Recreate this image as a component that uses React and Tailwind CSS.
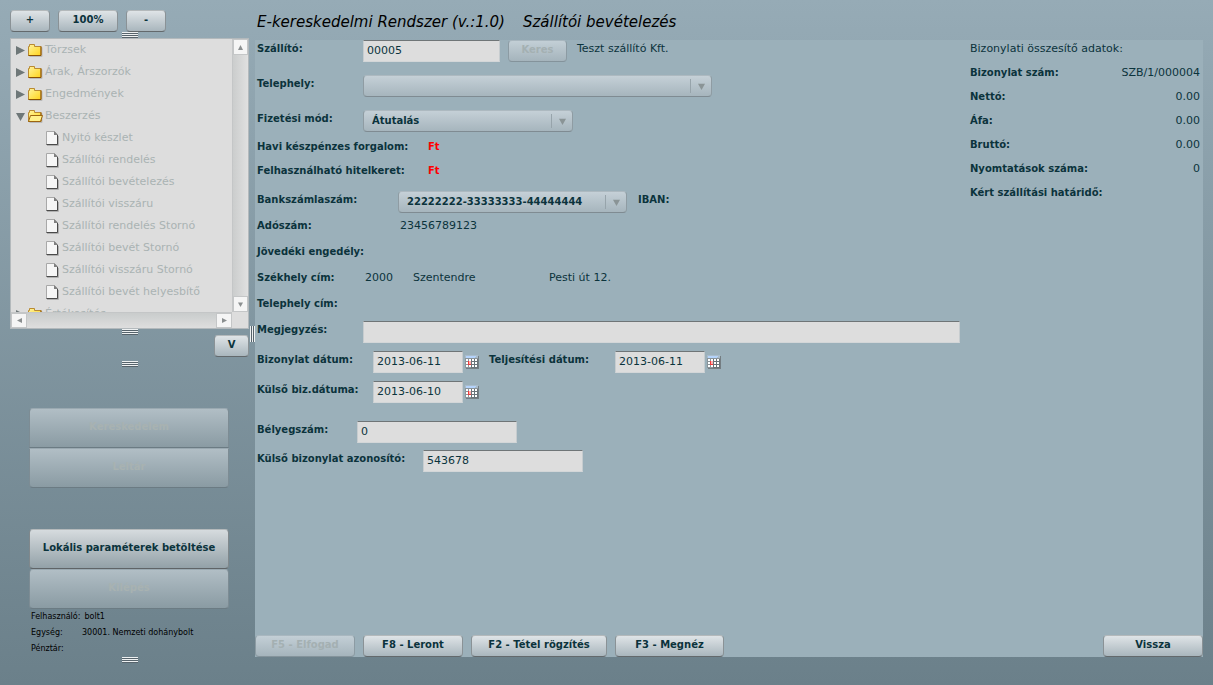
import React from 'react';

const BTN =
  'shrink-0 rounded-[4px] border pb-[2px] text-[10px] font-bold leading-none flex items-center justify-center';
const BTN_ON =
  'border-t-[#b4b9bb] border-x-[#8a9296] border-b-[#63696c] bg-linear-to-b from-[#dfe4e7] to-[#a9b6bd] text-[#0b333c]';
const BTN_OFF =
  'border-t-[#a9b7bf] border-x-[#8c9ba3] border-b-[#84939b] bg-linear-to-b from-[#c3cfd6] to-[#a5b4bc] text-[#a4b0b2]';
const BIG_ON =
  'border-t-[#b4b9bb] border-x-[#80888c] border-b-[#5f6467] bg-linear-to-b from-[#d6dbde] to-[#93a1a8] text-[#0b333c]';
const BIG_OFF =
  'border-t-[#9aa9b1] border-x-[#7d8c94] border-b-[#6b7b83] bg-linear-to-b from-[#b1bec5] to-[#8a9ba3] text-[#a8b2b1]';

function Button({ className = '', disabled = false, big = false, children }) {
  const skin = big ? (disabled ? BIG_OFF : BIG_ON) : disabled ? BTN_OFF : BTN_ON;
  return (
    <button type="button" disabled={disabled} className={`${BTN} ${skin} ${big ? 'h-10' : 'h-[22px]'} ${className}`}>
      {children}
    </button>
  );
}

function Grip({ className = '' }) {
  return (
    <svg width="16" height="6" viewBox="0 0 16 6" shapeRendering="crispEdges" className={`shrink-0 ${className}`} aria-hidden="true">
      <path d="M0 0h16v1H0zM0 2h16v1H0zM0 4h16v1H0z" fill="#eef1f2" />
      <path d="M0 1h16v1H0zM0 3h16v1H0zM0 5h16v1H0z" fill="#56636b" />
    </svg>
  );
}

function Folder({ open }) {
  return (
    <svg width="15" height="13" viewBox="0 0 15 13" className="shrink-0" aria-hidden="true">
      <defs>
        <linearGradient id="fold" x1="0" y1="0" x2="1" y2="1">
          <stop offset="0" stopColor="#fff3a0" />
          <stop offset="0.5" stopColor="#ffe45a" />
          <stop offset="1" stopColor="#ffd21c" />
        </linearGradient>
      </defs>
      <path d="M1.5 12.5h12.5v-9" fill="none" stroke="#b9b9b9" />
      <path d="M.5 11.5v-9h1v-2h5v2h6.500v9z" fill="url(#fold)" stroke="#b98a33" />
      <path d="M.5 11.500H13v-9" fill="none" stroke="#8c5200" />
      {open && <path d="M.5 11.5L2.500 5.500h12L12.500 11.500z" fill="#fff08a" stroke="#9c6410" />}
    </svg>
  );
}

function Page() {
  return (
    <svg width="13" height="15" viewBox="0 0 13 15" className="shrink-0" aria-hidden="true">
      <path d="M1 14.5h11.500V5" fill="none" stroke="#b0b0b0" />
      <path d="M.5 13.5V.5h8l3 3v10z" fill="#f6f6f6" stroke="#a8a8a8" />
      <path d="M.5 13.5h11V4" fill="none" stroke="#4a4a4a" />
      <path d="M8 0v4h4z" fill="#808080" />
    </svg>
  );
}

function Triangle({ dir, className = 'text-[#6e7778]', size = 9 }) {
  const d = {
    right: 'M0 0L9 4.5L0 9z',
    left: 'M9 0L0 4.5L9 9z',
    down: 'M0 1H9L4.500 9z',
    up: 'M0 9H9L4.500 0z',
  }[dir];
  return (
    <svg width={size} height={size} viewBox="0 0 9 9" className={`shrink-0 ${className}`} aria-hidden="true">
      <path d={d} fill="currentColor" />
    </svg>
  );
}

function Calendar() {
  return (
    <svg width="14" height="14" viewBox="0 0 14 14" shapeRendering="crispEdges" aria-hidden="true">
      <path d="M1 1h13v13H1z" fill="#747d82" />
      <path d="M0 0h13v13H0z" fill="#8b9499" />
      <path d="M6 4h7v9H6z" fill="#6a7378" />
      <path d="M0 0h13v3H0z" fill="#a9bccb" />
      <path d="M1 1h11l-3 2H1z" fill="#b4d3fb" />
      <path
        d="M1 4h2v2H1zM4 4h2v2H4zM7 4h2v2H7zM10 4h2v2h-2zM1 7h2v2H1zM7 7h2v2H7zM10 7h2v2h-2zM1 10h2v2H1zM4 10h2v2H4zM7 10h2v2H7zM10 10h2v2h-2z"
        fill="#fff"
      />
      <path d="M4 6h2v3H4z" fill="#ffb0b0" />
      <path d="M3 9h3v1H3zM3 6h1v3H3z" fill="#f03a3a" />
    </svg>
  );
}

function Label({ className = '', htmlFor, children }) {
  const cls = `shrink-0 text-[10px] font-bold leading-[18px] whitespace-nowrap ${className}`;
  return htmlFor ? (
    <label htmlFor={htmlFor} className={cls}>
      {children}
    </label>
  ) : (
    <span className={cls}>{children}</span>
  );
}

function Input({ className = '', ...props }) {
  return (
    <input
      type="text"
      className={`h-[22px] rounded-none border border-t-[#6f7577] border-x-[#c6cccf] border-b-[#d3d6d8] bg-[#dddddd] px-[3px] pb-[2px] text-[11px] text-[#0b333c] outline-none ${className}`}
      {...props}
    />
  );
}

function Select({ id, className = '', value }) {
  return (
    <div className={`relative shrink-0 ${className}`}>
      <select
        id={id}
        defaultValue={value}
        className="h-[22px] w-full appearance-none rounded-[4px] border border-t-[#adb9c0] border-x-[#8f9ca3] border-b-[#7f8b92] bg-linear-to-b from-[#c5d0d7] to-[#a6b5bd] pl-2 pr-6 text-[10px] font-bold leading-[18px] text-[#0b333c] outline-none"
      >
        <option value={value}>{value}</option>
      </select>
      <span className="pointer-events-none absolute inset-y-1 right-0 flex w-[22px] items-center justify-center border-l border-[#97a4ab]">
        <Triangle dir="down" size={7} className="text-[#8a9496]" />
      </span>
    </div>
  );
}

function DateField({ id, value }) {
  return (
    <div className="flex shrink-0 gap-[2px]">
      <Input id={id} defaultValue={value} className="w-[90px]" />
      <button type="button" aria-label="Naptár" className="flex h-[22px] items-center">
        <Calendar />
      </button>
    </div>
  );
}

const FOLDERS = ['Törzsek', 'Árak, Árszorzók', 'Engedmények'];
const PAGES = [
  'Nyitó készlet',
  'Szállítói rendelés',
  'Szállítói bevételezés',
  'Szállítói visszáru',
  'Szállítói rendelés Stornó',
  'Szállítói bevét Stornó',
  'Szállítói visszáru Stornó',
  'Szállítói bevét helyesbítő',
];

function FolderRow({ label, open = false }) {
  return (
    <li>
      <button type="button" className="flex h-[22px] w-full items-center pl-[5px]">
        <Triangle dir={open ? 'down' : 'right'} />
        <span className="ml-[3px] mr-[2px] flex">
          <Folder open={open} />
        </span>
        {label}
      </button>
    </li>
  );
}

const SCROLL_BTN = 'flex shrink-0 items-center justify-center border border-[#c4c6c7] bg-[#f5f5f5]';

function Tree() {
  return (
    <div className="flex h-[291px] shrink-0 flex-col border border-[#b3b9bc] bg-[#dddddd] text-[#aab3b3]">
      <div className="flex min-h-0 flex-1">
        <ul className="min-w-0 flex-1 overflow-hidden whitespace-nowrap">
          {FOLDERS.map((f) => (
            <FolderRow key={f} label={f} />
          ))}
          <FolderRow label="Beszerzés" open />
          {PAGES.map((p) => (
            <li key={p}>
              <button type="button" className="flex h-[22px] w-full items-center gap-[3px] pl-[35px]">
                <Page />
                {p}
              </button>
            </li>
          ))}
          <FolderRow label="Értékesítés" />
        </ul>
        <div className="flex w-4 shrink-0 flex-col justify-between border-l border-[#c4c6c7] bg-linear-to-r from-[#cbcdcd] to-[#e0e0e0]">
          <button type="button" aria-label="Fel" className={`${SCROLL_BTN} h-4`}>
            <Triangle dir="up" size={5} className="text-[#8b8f90]" />
          </button>
          <button type="button" aria-label="Le" className={`${SCROLL_BTN} h-4`}>
            <Triangle dir="down" size={5} className="text-[#8b8f90]" />
          </button>
        </div>
      </div>
      <div className="flex h-4 shrink-0 pr-4">
        <div className="flex flex-1 justify-between border-t border-[#c4c6c7] bg-linear-to-b from-[#c9cccc] to-[#dedede]">
          <button type="button" aria-label="Balra" className={`${SCROLL_BTN} w-4`}>
            <Triangle dir="left" size={5} className="text-[#8b8f90]" />
          </button>
          <button type="button" aria-label="Jobbra" className={`${SCROLL_BTN} w-4`}>
            <Triangle dir="right" size={5} className="text-[#8b8f90]" />
          </button>
        </div>
      </div>
    </div>
  );
}

const SUMMARY = [
  ['Bizonylat szám:', 'SZB/1/000004'],
  ['Nettó:', '0.00'],
  ['Áfa:', '0.00'],
  ['Bruttó:', '0.00'],
  ['Nyomtatások száma:', '0'],
  ['Kért szállítási határidő:', ''],
];

export default function App() {
  return (
    <div className="flex min-h-screen bg-linear-to-b from-[#96abb6] to-[#6b808a] pr-[10px] pl-[10px] font-['DejaVu_Sans',sans-serif] text-[11px] text-[#0b333c]">
      <aside className="flex w-[239px] shrink-0 flex-col pt-[10px]">
        <div className="flex gap-2">
          <Button className="w-10">+</Button>
          <Button className="w-[60px]">100%</Button>
          <Button className="w-10">-</Button>
        </div>
        <Grip className="self-center" />
        <Tree />
        <Grip className="self-center" />
        <Button className="w-[35px] self-end">V</Button>
        <Grip className="mt-1 self-center" />
        <div className="mt-[41px] flex flex-col pr-5 pl-[19px]">
          <Button big disabled className="rounded-b-none">
            Kereskedelem
          </Button>
          <Button big disabled className="rounded-t-none">
            Leltár
          </Button>
          <Button big className="mt-[41px]">
            Lokális paraméterek betöltése
          </Button>
          <Button big disabled>
            Kilépés
          </Button>
        </div>
        <dl className="flex flex-col pl-[21px] text-[8px] leading-4 text-black">
          <div className="flex gap-1">
            <dt>Felhasználó:</dt>
            <dd>bolt1</dd>
          </div>
          <div className="flex">
            <dt className="w-[51px]">Egység:</dt>
            <dd>30001. Nemzeti dohánybolt</dd>
          </div>
          <div className="flex">
            <dt>Pénztár:</dt>
          </div>
        </dl>
        <Grip className="self-center" />
      </aside>

      <div className="flex w-[6px] shrink-0 items-start pt-[326px] pl-px">
        <svg width="5" height="16" viewBox="0 0 5 16" shapeRendering="crispEdges" aria-hidden="true">
          <path d="M0 0h1v16H0zM2 0h1v16H2zM4 0h1v16H4z" fill="#eef1f2" />
          <path d="M1 0h1v16H1zM3 0h1v16H3z" fill="#56636b" />
        </svg>
      </div>

      <main className="flex min-w-0 flex-1 flex-col pb-7">
        <h1 className="flex h-10 items-center gap-[18px] pt-1 pl-[2px] text-[15px] text-black italic">
          <span>E-kereskedelmi Rendszer (v.:1.0)</span>
          <span>Szállítói bevételezés</span>
        </h1>

        <section className="flex flex-1 flex-col justify-between bg-[#9bb0ba]">
          <div className="flex gap-[10px] pr-[3px] pl-[2px]">
            <form className="min-w-0 flex-1">
              <div className="flex h-[35px] items-start">
                <Label htmlFor="szallito" className="w-[106px]">Szállító:</Label>
                <Input id="szallito" defaultValue="00005" className="w-[137px]" />
                <Button disabled className="ml-2 w-[59px]">Keres</Button>
                <span className="ml-[10px] leading-[18px]">Teszt szállító Kft.</span>
              </div>
              <div className="flex h-[35px] items-start">
                <Label htmlFor="telephely" className="w-[106px]">Telephely:</Label>
                <Select id="telephely" value="" className="w-[349px]" />
              </div>
              <div className="flex h-7 items-start">
                <Label htmlFor="fizetes" className="w-[106px]">Fizetési mód:</Label>
                <Select id="fizetes" value="Átutalás" className="w-[210px]" />
              </div>
              <div className="flex h-6 items-start">
                <Label className="w-[171px]">Havi készpénzes forgalom:</Label>
                <span className="text-[10px] leading-[18px] font-bold text-[#ff0000]">Ft</span>
              </div>
              <div className="flex h-[29px] items-start">
                <Label className="w-[171px]">Felhasználható hitelkeret:</Label>
                <span className="text-[10px] leading-[18px] font-bold text-[#ff0000]">Ft</span>
              </div>
              <div className="flex h-[26px] items-start">
                <Label htmlFor="bank" className="w-[141px]">Bankszámlaszám:</Label>
                <Select id="bank" value="22222222-33333333-44444444" className="w-[229px]" />
                <Label className="ml-[11px]">IBAN:</Label>
              </div>
              <div className="flex h-[26px] items-start">
                <Label className="w-[143px]">Adószám:</Label>
                <span className="leading-[18px]">23456789123</span>
              </div>
              <div className="flex h-[26px] items-start">
                <Label>Jövedéki engedély:</Label>
              </div>
              <div className="flex h-[26px] items-start leading-[18px]">
                <Label className="w-[108px]">Székhely cím:</Label>
                <span className="w-12">2000</span>
                <span className="w-[136px]">Szentendre</span>
                <span>Pesti út 12.</span>
              </div>
              <div className="flex h-[26px] items-start">
                <Label>Telephely cím:</Label>
              </div>
              <div className="flex h-[30px] items-start">
                <Label htmlFor="megjegyzes" className="w-[106px]">Megjegyzés:</Label>
                <Input id="megjegyzes" className="min-w-0 flex-1" />
              </div>
              <div className="flex h-[30px] items-start">
                <Label htmlFor="bizdatum" className="w-[116px]">Bizonylat dátum:</Label>
                <DateField id="bizdatum" value="2013-06-11" />
                <Label htmlFor="teljdatum" className="ml-[10px] w-[126px]">Teljesítési dátum:</Label>
                <DateField id="teljdatum" value="2013-06-11" />
              </div>
              <div className="flex h-10 items-start">
                <Label htmlFor="kulsodatum" className="w-[116px]">Külső biz.dátuma:</Label>
                <DateField id="kulsodatum" value="2013-06-10" />
              </div>
              <div className="flex h-[29px] items-start">
                <Label htmlFor="belyeg" className="w-[100px]">Bélyegszám:</Label>
                <Input id="belyeg" defaultValue="0" className="w-40" />
              </div>
              <div className="flex items-start">
                <Label htmlFor="azonosito" className="w-[166px]">Külső bizonylat azonosító:</Label>
                <Input id="azonosito" defaultValue="543678" className="w-40" />
              </div>
            </form>

            <div className="flex w-[230px] shrink-0 flex-col gap-[6px] leading-[18px]">
              <h2>Bizonylati összesítő adatok:</h2>
              <dl className="flex flex-col gap-[6px]">
                {SUMMARY.map(([k, v]) => (
                  <div key={k} className="flex justify-between">
                    <dt className="text-[10px] leading-[18px] font-bold">{k}</dt>
                    <dd>{v}</dd>
                  </div>
                ))}
              </dl>
            </div>
          </div>

          <div className="flex gap-2">
            <Button disabled className="w-[100px]">F5 - Elfogad</Button>
            <Button className="w-[100px]">F8 - Leront</Button>
            <Button className="w-[136px]">F2 - Tétel rögzítés</Button>
            <Button className="w-[109px]">F3 - Megnéz</Button>
            <Button className="ml-auto w-[100px]">Vissza</Button>
          </div>
        </section>
      </main>
    </div>
  );
}
